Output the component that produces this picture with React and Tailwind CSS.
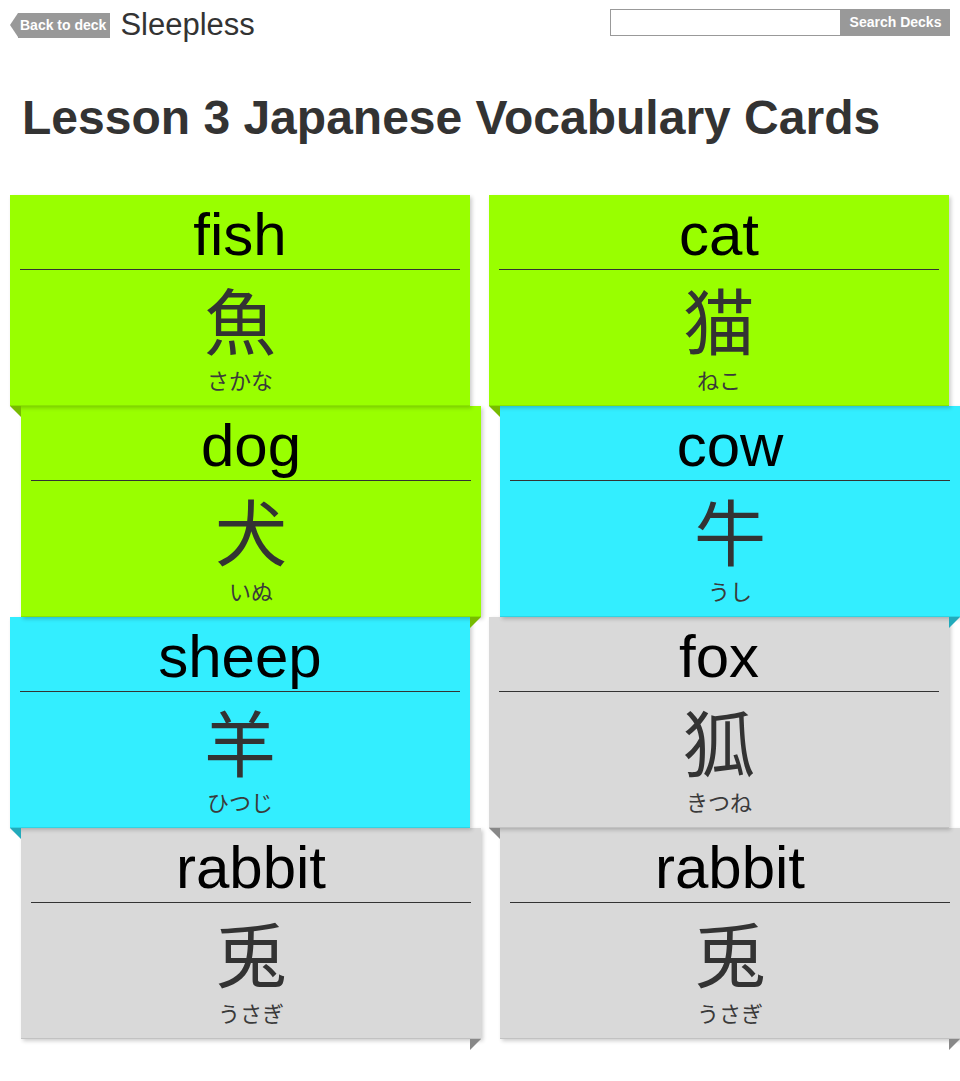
import React from 'react';

const cards = {
  left: [
    { en: 'fish', kanji: '魚', kana: 'さかな', tone: 'green' },
    { en: 'dog', kanji: '犬', kana: 'いぬ', tone: 'green' },
    { en: 'sheep', kanji: '羊', kana: 'ひつじ', tone: 'cyan' },
    { en: 'rabbit', kanji: '兎', kana: 'うさぎ', tone: 'gray' },
  ],
  right: [
    { en: 'cat', kanji: '猫', kana: 'ねこ', tone: 'green' },
    { en: 'cow', kanji: '牛', kana: 'うし', tone: 'cyan' },
    { en: 'fox', kanji: '狐', kana: 'きつね', tone: 'gray' },
    { en: 'rabbit', kanji: '兎', kana: 'うさぎ', tone: 'gray' },
  ],
};

const tones = {
  green: { card: 'bg-[#99ff00]', fold: 'bg-[#77bb00]' },
  cyan: { card: 'bg-[#33eeff]', fold: 'bg-[#22aabb]' },
  gray: { card: 'bg-[#d9d9d9]', fold: 'bg-[#888888]' },
};

function Card({ card, shifted, z }) {
  const t = tones[card.tone];
  return (
    <div className={`relative w-[460px] h-[211px] ${shifted ? 'ml-[11px]' : ''} ${z}`}>
      <div className={`flex flex-col h-full ${t.card} border-b border-black/10 shadow-[2px_2px_4px_rgba(0,0,0,0.2)]`}>
        <div className="h-[74px] flex items-center justify-center text-[60px] leading-none text-black pt-[5px]">
          {card.en}
        </div>
        <div className="mx-[10px] h-px bg-[#333]" />
        <div className="flex flex-col items-center text-[#333]">
          <div className="h-[80px] text-[72px] leading-[80px] mt-[8px] font-['Noto_Sans_CJK_JP',sans-serif]">{card.kanji}</div>
          <div className="h-[24px] text-[22px] leading-[24px] mt-[9px] text-[#3a3a3a] font-['Noto_Sans_CJK_JP',sans-serif]">{card.kana}</div>
        </div>
      </div>
      {shifted ? (
        <div className={`absolute top-full right-0 w-[11px] h-[11px] ${t.fold} [clip-path:polygon(0_0,100%_0,0_100%)]`} />
      ) : (
        <div className={`absolute top-full left-0 w-[11px] h-[11px] ${t.fold} [clip-path:polygon(0_0,100%_0,100%_100%)]`} />
      )}
    </div>
  );
}

function Column({ list }) {
  const zs = ['z-[4]', 'z-[3]', 'z-[2]', 'z-[1]'];
  return (
    <div className="flex flex-col w-[471px]">
      {list.map((c, i) => (
        <Card key={i} card={c} shifted={i % 2 === 1} z={zs[i]} />
      ))}
    </div>
  );
}

export default function App() {
  return (
    <div className="min-h-screen bg-white font-['Liberation_Sans',Arial,sans-serif]">
      <div className="flex items-start justify-between px-[10px] pt-[9px]">
        <div className="flex items-center gap-[10px]">
          <div className="flex items-center h-[25px] mt-[1px]">
            <div className="w-0 h-0 border-y-[12.5px] border-y-transparent border-r-[8px] border-r-[#999]" />
            <div className="h-[25px] bg-[#999] text-white font-bold text-[14px] leading-[25px] pl-[2px] pr-[4px]">
              Back to deck
            </div>
          </div>
          <div className="text-[31px] leading-none text-[#333]">Sleepless</div>
        </div>
        <div className="flex h-[27px]">
          <input className="w-[231px] h-[27px] border border-[#999] outline-none px-1" />
          <button className="w-[109px] h-[27px] bg-[#999] text-white font-bold text-[14px]">Search Decks</button>
        </div>
      </div>

      <h1 className="px-[22px] pt-[54px] text-[48px] font-bold text-[#333] leading-none">
        Lesson 3 Japanese Vocabulary Cards
      </h1>

      <div className="flex gap-[8px] px-[10px] mt-[53px] pb-[40px]">
        <Column list={cards.left} />
        <Column list={cards.right} />
      </div>
    </div>
  );
}
